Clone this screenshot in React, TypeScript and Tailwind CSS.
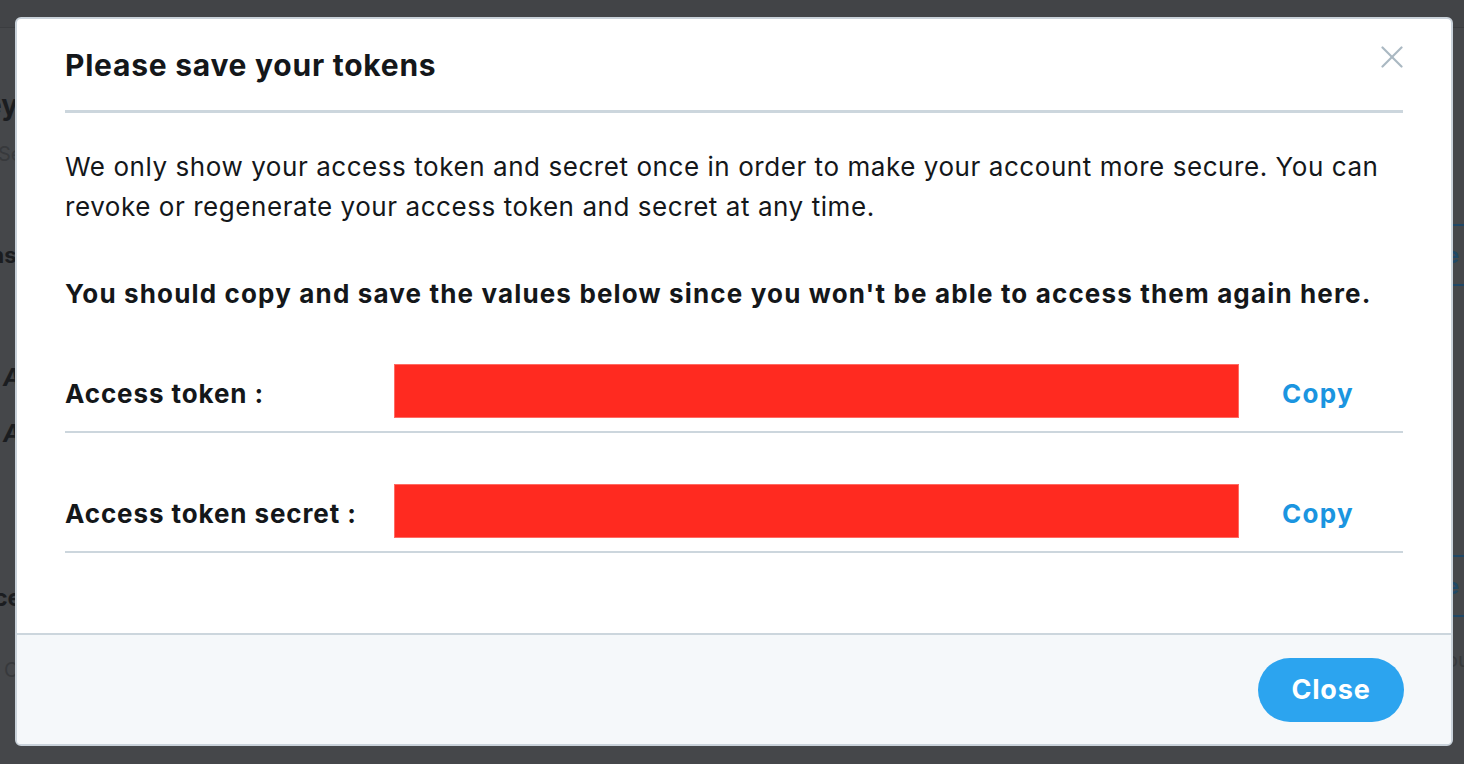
type TokenRow = {
  label: string;
};

const rows: TokenRow[] = [
  { label: "Access token :" },
  { label: "Access token secret :" },
];

// dimmed page that sits behind the overlay, only its edges show
const BackgroundPage = () => (
  <div className="flex h-full flex-col">
    <div className="h-[28px] shrink-0 border-b border-[#3b3d40] bg-[#424447]" />
    <div className="flex flex-1 justify-between">
      <div className="flex flex-col text-[#1b1d20]">
        <div className="-ml-[34px] mt-[60px] text-[28px] font-bold leading-[34px]">Keys and tokens</div>
        <div className="-ml-[2px] mt-[20px] text-[20px] leading-[24px] text-[#37393c]">Secrets and access tokens</div>
        <div className="-ml-[116px] mt-[76px] text-[22px] font-bold leading-[26px]">Permissions</div>
        <div className="ml-[3px] mt-[96px] text-[24px] font-bold italic leading-[28px]">API key</div>
        <div className="ml-[3px] mt-[28px] text-[24px] font-bold italic leading-[28px]">API secret key</div>
        <div className="-ml-[38px] mt-[136px] text-[24px] font-bold leading-[28px]">Access token &amp; access token secret</div>
        <div className="ml-[4px] mt-[46px] text-[20px] leading-[24px] text-[#37393c]">Created</div>
        <div className="ml-[26px] mt-[16px] text-[20px] italic leading-[24px] text-[#37393c]">/</div>
      </div>
      <div className="flex w-[20px] flex-col text-[#1f4766]">
        <div className="mt-[196px] flex h-[62px] items-center border-y-2 border-[#1f4766] pl-[2px] text-[22px] font-bold">e</div>
        <div className="mt-[269px] flex h-[62px] items-center border-y-2 border-[#1f4766] pl-[2px] text-[22px] font-bold">e</div>
        <div className="mt-[28px] pl-[2px] text-[20px] text-[#37393c]">ou</div>
      </div>
    </div>
  </div>
);

const CloseIcon = () => (
  <svg width="22" height="22" viewBox="0 0 22 22" fill="none" stroke="currentColor" strokeWidth="2.2" strokeLinecap="round">
    <line x1="1.5" y1="1.5" x2="20.5" y2="20.5" />
    <line x1="20.5" y1="1.5" x2="1.5" y2="20.5" />
  </svg>
);

const App = () => {
  return (
    <div className="relative h-[764px] w-full overflow-hidden bg-[#45474a] font-['Inter',sans-serif]">
      <BackgroundPage />

      <div className="absolute inset-0">
        <div className="ml-[15px] mt-[17px] flex h-[729px] w-[1438px] flex-col overflow-hidden rounded-[6px] border-2 border-[#c9d2da] bg-white text-[#14171a]">
          <div className="px-12 pt-[29px]">
            <div className="flex items-start justify-between">
              <h2 className="text-[30px] font-bold leading-[34px] tracking-[0.75px]">Please save your tokens</h2>
              <button className="mt-[-2px] text-[#aab8c2]">
                <CloseIcon />
              </button>
            </div>
            <div className="mt-[28px] h-[3px] bg-[#ccd6dd]" />

            <p className="mt-[34px] text-[26px] leading-[40px] tracking-[0.56px]">
              We only show your access token and secret once in order to make your account more secure. You can
              revoke or regenerate your access token and secret at any time.
            </p>
            <p className="mt-[47px] text-[26px] font-bold leading-[40px] tracking-[1.15px]">
              You should copy and save the values below since you won't be able to access them again here.
            </p>

            <div className="mt-[50px] flex flex-col gap-[51px]">
              {rows.map((r) => (
                <div key={r.label} className="border-b-2 border-[#ccd6dd] pb-[13px]">
                  <div className="flex items-center">
                    <div className="w-[329px] pt-[5px] text-[26px] font-bold tracking-[0.9px]">{r.label}</div>
                    <div className="h-[54px] w-[845px] border border-[#ff6b63] bg-[#ff2a20]" />
                    <button className="flex-1 pr-[6px] pt-[5px] text-center text-[26px] font-bold tracking-[1.3px] text-[#1b95e0]">
                      Copy
                    </button>
                  </div>
                </div>
              ))}
            </div>
          </div>

          <div className="mt-auto flex h-[111px] items-center justify-end border-t-2 border-[#ccd6dd] bg-[#f5f8fa] pl-12 pr-[47px]">
            <button className="mb-[-1px] h-[64px] w-[146px] rounded-full bg-[#2ca4ef] text-[27px] font-bold tracking-[0.8px] text-white">
              Close
            </button>
          </div>
        </div>
      </div>
    </div>
  );
};

export default App;
